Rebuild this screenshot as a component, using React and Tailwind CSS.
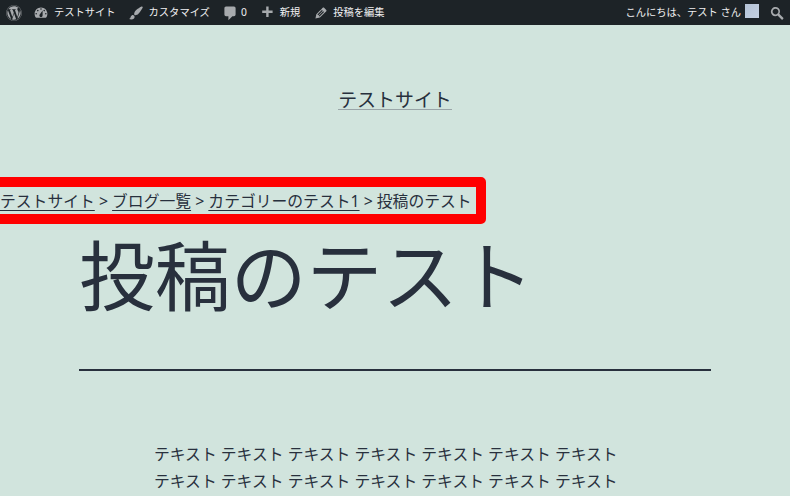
import { FaWordpress } from 'react-icons/fa';

const font = 'font-["Noto_Sans","Noto_Sans_CJK_JP",sans-serif]';

function BarItem({ icon, children, className = '' }) {
  return (
    <div className={`flex items-center ${className}`}>
      {icon}
      <span className="text-[10.27px] leading-[25px] text-[#f0f0f1]">{children}</span>
    </div>
  );
}

function Glyph({ d, className = '' }) {
  return (
    <svg viewBox="0 0 20 20" className={`h-4 w-4 fill-[#a7aaad] ${className}`}>
      <path fillRule="evenodd" d={d} />
    </svg>
  );
}

const dashboard =
  'M3.76 16h12.48c1.1-1.37 1.76-3.11 1.76-5 0-4.42-3.58-8-8-8s-8 3.58-8 8c0 1.89.66 3.63 1.76 5zM10 4c.55 0 1 .45 1 1s-.45 1-1 1-1-.45-1-1 .45-1 1-1zM6 6c.55 0 1 .45 1 1s-.45 1-1 1-1-.45-1-1 .45-1 1-1zm8 0c.55 0 1 .45 1 1s-.45 1-1 1-1-.45-1-1 .45-1 1-1zm-5.37 5.55L12 7v6c0 1.1-.9 2-2 2s-2-.9-2-2c0-.57.24-1.08.63-1.45zM4 10c.55 0 1 .45 1 1s-.45 1-1 1-1-.45-1-1 .45-1 1-1zm12 0c.55 0 1 .45 1 1s-.45 1-1 1-1-.45-1-1 .45-1 1-1z';
const brush =
  'M18.33 3.57s.27-.8-.31-1.36c-.53-.52-1.22-.24-1.22-.24-.61.3-5.76 3.47-7.67 5.57-.86.96-2.06 3.79-1.09 4.82.92.98 3.96-.17 4.79-1 2.06-2.06 5.21-7.17 5.5-7.79zM1.4 17.65c2.37-1.56 1.46-3.41 3.23-4.64.93-.65 2.22-.62 3.08.29.63.67.8 2.57-.16 3.46-1.57 1.45-4 1.55-6.15.89z';
const comment = 'M5 2h10c1.1 0 2 .9 2 2v8c0 1.1-.9 2-2 2h-2l-5 5v-5H5c-1.1 0-2-.9-2-2V4c0-1.1.9-2 2-2z';
const plus = 'M17 7v3h-5v5H9v-5H4V7h5V2h3v5h5z';
const pencil =
  'M13.89 3.39l2.71 2.72c.46.46.42 1.24.03 1.64l-8.01 8.02-5.56 1.16 1.16-5.58s7.6-7.63 7.99-8.03c.39-.39 1.22-.39 1.68.07zm-2.73 2.79l-5.59 5.61 1.11 1.11 5.54-5.65zm-2.97 8.23l5.58-5.6-1.07-1.08-5.59 5.6z';
const search =
  'M12.14 4.18c1.87 1.87 2.11 4.75.72 6.89.3.22.59.46.86.73l4.1 4.1c.39.39.39 1.03 0 1.42l-.71.71c-.39.39-1.03.39-1.42 0l-4.1-4.1c-.27-.27-.51-.56-.73-.86-2.14 1.39-5.02 1.15-6.89-.72-2.19-2.19-2.19-5.75 0-7.94s5.75-2.42 8.17-.23zm-1.41 1.41c-1.41-1.41-3.71-1.41-5.12 0s-1.41 3.71 0 5.12 3.71 1.41 5.12 0 1.41-3.71 0-5.12z';

function AdminBar() {
  return (
    <div className="flex h-[25px] shrink-0 items-center justify-between bg-[#1d2327]">
      <div className="flex items-center">
        <FaWordpress className="ml-[6px] h-4 w-4 text-[#a7aaad]" />
        <BarItem className="ml-[11px]" icon={<Glyph d={dashboard} className="mr-[5px]" />}>テストサイト</BarItem>
        <BarItem className="ml-[12px]" icon={<Glyph d={brush} className="mr-[5px]" />}>カスタマイズ</BarItem>
        <BarItem className="ml-[12px]" icon={<Glyph d={comment} className="mr-[3px]" />}>0</BarItem>
        <BarItem className="ml-[12px]" icon={<Glyph d={plus} className="mr-[5px]" />}>新規</BarItem>
        <BarItem className="ml-[13px]" icon={<Glyph d={pencil} className="mr-[4px]" />}>投稿を編集</BarItem>
      </div>
      <div className="flex items-center">
        <span className="text-[10.27px] leading-[25px] text-[#f0f0f1]">こんにちは、テスト さん</span>
        <div className="mb-[3px] ml-[4px] h-[14px] w-[14px] bg-gradient-to-br from-[#b4c2d6] to-[#c4d0e0]" />
        <Glyph d={search} className="ml-[10px] mr-[5px]" />
      </div>
    </div>
  );
}

function Crumb({ children }) {
  return <a className="underline decoration-1 underline-offset-[3px]">{children}</a>;
}

export default function App() {
  const line = 'テキスト テキスト テキスト テキスト テキスト テキスト テキスト';

  return (
    <div className={`flex h-[496px] flex-col overflow-hidden bg-[#d1e4dd] text-[#28303d] ${font}`}>
      <AdminBar />

      <header className="flex justify-center pt-[66px]">
        <a className="border-b border-[#9aa5a8] text-[18.96px] leading-[18px]">テストサイト</a>
      </header>

      <nav className="mt-[67px] -ml-[16px] self-start whitespace-nowrap rounded-[5px] border-[10px] border-[#ff0000] pl-[6px] pr-[4px] pt-[1px] text-[15.8px] leading-[26px]">
        <Crumb>テストサイト</Crumb> &gt; <Crumb>ブログ一覧</Crumb> &gt; <Crumb>カテゴリーのテスト1</Crumb> &gt; 投稿のテスト
      </nav>

      <main className="px-[79px]">
        <h1 className="mt-[7px] text-[75.84px] font-normal leading-[89px]">投稿のテスト</h1>
        <hr className="mt-[49px] border-0 border-b-[2px] border-[#28303d]" />
        <div className="mx-auto mt-[70px] w-[482px] text-[15.8px] leading-[27px]">
          <p>{line}</p>
          <p>{line}</p>
        </div>
      </main>
    </div>
  );
}
